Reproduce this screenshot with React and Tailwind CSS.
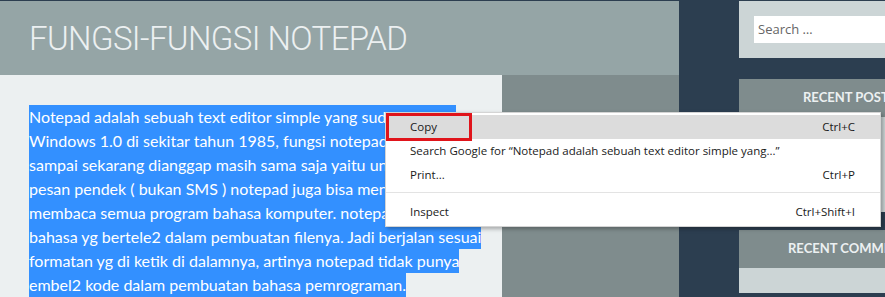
import React from 'react';

const lines = [
  { text: 'Notepad adalah sebuah text editor simple yang sudah ada sejak', full: true },
  { text: 'Windows 1.0 di sekitar tahun 1985, fungsi notepad dari dulu', full: true },
  { text: 'sampai sekarang dianggap masih sama saja yaitu untuk membuat', full: true },
  { text: 'pesan pendek ( bukan SMS ) notepad juga bisa menyimpan dan', full: true },
  { text: 'membaca semua program bahasa komputer. notepad tidak punya', full: true },
  { text: 'bahasa yg bertele2 dalam pembuatan filenya. Jadi berjalan sesuai' },
  { text: 'formatan yg di ketik di dalamnya, artinya notepad tidak punya' },
  { text: 'embel2 kode dalam pembuatan bahasa pemrograman.' },
];

const menu = [
  { label: 'Copy', key: 'Ctrl+C', active: true },
  { label: 'Search Google for \u201cNotepad adalah sebuah text editor simple yang...\u201d' },
  { label: 'Print...', key: 'Ctrl+P' },
  { sep: true },
  { label: 'Inspect', key: 'Ctrl+Shift+I' },
];

const ContextMenu = () => (
  <div className="absolute left-[385px] top-[112px] w-[496px] bg-white border border-[#d4d4d4] shadow-[2px_2px_4px_rgba(0,0,0,0.3)] py-[2px] font-['Open_Sans',sans-serif] text-[11.5px] text-[#1a1a1a]">
    {menu.map((m, i) =>
      m.sep ? (
        <div key={i} className="h-[1px] bg-[#e3e3e3] mt-[5px] mb-[7px]"></div>
      ) : (
        <div
          key={i}
          className={`relative flex items-center justify-between h-[24px] pl-[24px] pr-[25px] ${m.active ? 'bg-[#dcdcdc]' : ''}`}
        >
          <span>{m.label}</span>
          {m.key && <span>{m.key}</span>}
          {m.active && (
            <div className="absolute left-0 -top-[2px] w-[86px] h-[28px] border-[3px] border-[#e0141b]"></div>
          )}
        </div>
      )
    )}
  </div>
);

export default function App() {
  return (
    <div className="relative w-[885px] h-[297px] overflow-hidden bg-[#2c3e50] font-['Lato',sans-serif]">
      <div className="flex h-full pt-[1px]">
        <div className="w-[679px] shrink-0 flex flex-col">
          <div className="h-[76px] bg-[#95a5a6] pl-[29px] pt-[18px]">
            <h1 className="font-['Roboto',sans-serif] text-[33px] font-light text-[#ecf0f1] leading-[40px] tracking-[-0.6px]">FUNGSI-FUNGSI NOTEPAD</h1>
          </div>
          <div className="flex flex-1">
            <div className="w-[502px] bg-[#ecf0f1] pl-[29px] pt-[30px]">
              {lines.map((l, i) => (
                <div
                  key={i}
                  className={`h-[24px] leading-[24px] bg-[#3390ff] text-white text-[16px] whitespace-nowrap overflow-hidden ${l.full ? 'w-[427px]' : 'w-fit'}`}
                >
                  {l.text}
                </div>
              ))}
            </div>
            <div className="flex-1 bg-[#7f8c8d]"></div>
          </div>
        </div>
        <div className="w-[146px] ml-[60px] shrink-0 flex flex-col overflow-hidden">
          <div className="h-[57px] bg-[#ccd5d6] pl-[15px] pt-[15px]">
            <div className="h-[27px] bg-white pl-[4px] flex items-center text-[13px] text-[#666] font-['Open_Sans',sans-serif] whitespace-nowrap">Search &hellip;</div>
          </div>
          <div className="mt-[21px] h-[38px] shrink-0 bg-[#7f8c8d] flex items-center pl-[64px] text-[13px] font-bold text-[#ecf0f1] whitespace-nowrap">RECENT POSTS</div>
          <div className="h-[95px] shrink-0 bg-[#ccd5d6]"></div>
          <div className="mt-[18px] h-[38px] shrink-0 bg-[#7f8c8d] flex items-center pl-[49px] text-[13px] font-bold text-[#ecf0f1] whitespace-nowrap">RECENT COMMENTS</div>
          <div className="h-[25px] shrink-0 bg-[#ccd5d6]"></div>
        </div>
      </div>
      <ContextMenu />
    </div>
  );
}
